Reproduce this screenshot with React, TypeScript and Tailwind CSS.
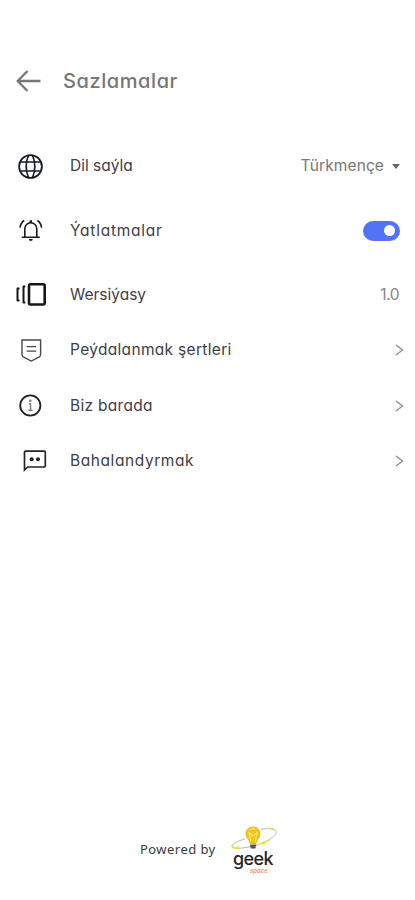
import React from "react";

type RowProps = {
  icon: React.ReactNode;
  label: string;
  rowClass: string;
  labelClass: string;
  children: React.ReactNode;
};

function Row({ icon, label, rowClass, labelClass, children }: RowProps) {
  return (
    <div className={`flex items-center ${rowClass}`}>
      <div className="flex w-[70px] shrink-0 items-center">{icon}</div>
      <span className={`whitespace-nowrap text-[15.5px] leading-5 text-[#404046] ${labelClass}`}>{label}</span>
      <div className="ml-auto flex items-center">{children}</div>
    </div>
  );
}

function Chevron() {
  return (
    <svg className="mr-[11px]" width="9" height="12" viewBox="0 0 9 12" fill="none" stroke="#8b8b8b" strokeWidth="1.3">
      <path d="M1 1 7.6 6 1 11" />
    </svg>
  );
}

const Globe = () => (
  <svg className="ml-[18px]" width="25" height="25" viewBox="0 0 25 25" fill="none" stroke="#141b2b" strokeWidth="1.8">
    <circle cx="12.5" cy="12.5" r="11.4" />
    <path d="M10.500 1.300C7.700 8 7.700 17 10.500 23.700M14.500 1.300c2.800 6.700 2.800 15.700 0 22.400" strokeWidth="1.6" />
    <path d="M2.200 8h20.600M2.200 17h20.600" strokeWidth="1.6" />
  </svg>
);

const Bell = () => (
  <svg className="ml-[19px]" width="24" height="23" viewBox="0 0 24 23" fill="none" stroke="#1c1c1f" strokeWidth="1.6">
    <path d="M5.8 18V9.7a6 6 0 0 1 12 0V18M2.8 18.2h18" />
    <path d="M11.8 3.8V1.3" strokeWidth="2.4" />
    <path d="M1 8.8c.2-3 1.7-5.6 4.2-7.3M22.6 8.8c-.2-3-1.7-5.6-4.2-7.3" />
    <path d="M9.8 20h4a2 2 0 0 1-4 0z" fill="#1c1c1f" stroke="none" />
  </svg>
);

const Version = () => (
  <svg className="ml-4" width="30" height="23" viewBox="0 0 30 23" fill="none" stroke="#171717">
    <rect x="13" y="1.3" width="15.7" height="20.2" rx="1.5" strokeWidth="2.6" />
    <path d="M9.300 3.500H7.500v16h1.800" strokeWidth="2" strokeLinejoin="round" />
    <path d="M3.500 5.500H1.500v12h2" strokeWidth="2" strokeLinejoin="round" />
  </svg>
);

const Shield = () => (
  <svg className="ml-[21px]" width="21" height="23" viewBox="0 0 21 23" fill="none" stroke="#48484d" strokeWidth="1.4">
    <path d="M1 1h18.6v14.600c0 1-.4 1.700-1.2 2.200l-8.100 4.200-8.100-4.200c-.8-.5-1.200-1.200-1.200-2.200z" />
    <path d="M5.7 7.7h9.5M5.7 12.2h9.5" strokeWidth="1.2" />
  </svg>
);

const Info = () => (
  <svg className="ml-[19px]" width="23" height="23" viewBox="0 0 23 23" fill="none">
    <circle cx="11.3" cy="11.5" r="10.1" stroke="#202124" strokeWidth="1.8" />
    <path d="M10 9.700h1.500v6.300M9.500 16.200h4" stroke="#85858a" strokeWidth="1.6" />
    <circle cx="11.3" cy="6.8" r="1.2" fill="#77777b" />
  </svg>
);

const Comment = () => (
  <svg className="ml-[23px]" width="24" height="22" viewBox="0 0 24 22" fill="none">
    <path d="M1.5 20V2.1c0-.5.3-.9.9-.9h19c.6 0 .9.4.9.9v14c0 .6-.3.9-.9.9H4.7z" stroke="#252525" strokeWidth="1.7" />
    <circle cx="8.7" cy="9.2" r="2" fill="#202020" />
    <circle cx="15" cy="9.2" r="2" fill="#202020" />
  </svg>
);

function GeekLogo() {
  return (
    <div className="w-12">
      <svg className="block" width="48" height="25" viewBox="0 0 48 25" fill="none">
        <path d="M15 13C7 15 1 18.500 2 21c1 2.400 12 1.500 23-1.500S47 10 46 5.500C45.3 2.500 37 2.100 31 3.300" stroke="#a5a5a5" strokeWidth=".8" />
        <path d="M3 19.400c-.8 2.200 3 3.300 7 3M28 18.500c5-1.300 9-2.900 12-4.600M37 2.400c3.500-.4 6.700.1 7.800 1.200" stroke="#e7e546" strokeWidth="1.2" />
        <path d="M23 1c-4.300 0-7 2.800-7 6.700 0 3.200 1.600 4.600 2.800 6.500.6 1.100.5 2.800 1.200 3.300h6c.8-.5.7-2.200 1.300-3.300C28.500 12.300 30 10.900 30 7.700 30 3.800 27.300 1 23 1z" fill="#f3c31c" stroke="#d7a516" strokeWidth=".6" />
        <path d="M20.800 15.500 19 6.500l4 3.500 4-3.500-1.800 9M20 4c1.500-1.500 4-1.600 5-.5" stroke="#fff06c" strokeWidth="1.1" />
        <path d="M20 18.500h6.200l-.8 4h-4.600z" fill="#59544e" />
        <circle cx="7" cy="22" r="1.4" fill="#f5df24" />
        <circle cx="33.500" cy="17" r="1.8" fill="#f5df24" />
      </svg>
      <div className="pl-[3px] text-[18px] font-medium leading-[15px] tracking-[-0.6px] text-[#242424]">geek</div>
      <div className="pl-[20px] pt-[1px] text-[6px] font-semibold italic leading-[7px] text-[#f39258]">space</div>
    </div>
  );
}

export default function App() {
  return (
    <div className="flex h-[900px] w-full flex-col bg-white font-['Inter','Noto_Sans',sans-serif] [font-feature-settings:'cv11']">
      <header className="mt-[61px] flex h-10 shrink-0 items-center">
        <svg className="ml-4" width="25" height="22" viewBox="0 0 25 22" fill="none" stroke="#777" strokeWidth="2.3">
          <path d="M11.500 1 1.700 11l9.800 10M1.700 11h22.800" />
        </svg>
        <h1 className="ml-[22px] text-[20px] font-medium leading-7 tracking-[0.58px] text-[#777]">Sazlamalar</h1>
      </header>
      <main className="mt-[33px] flex flex-col">
        <Row icon={<Globe />} label="Dil saýla" rowClass="h-16" labelClass="tracking-normal">
          <span className="text-[15.5px] leading-5 tracking-[0.1px] text-[#777]">Türkmençe</span>
          <svg className="ml-[8px] mr-[15px]" width="8" height="5" viewBox="0 0 8 5">
            <path d="M0 0h8L4 5z" fill="#666" />
          </svg>
        </Row>
        <Row icon={<Bell />} label="Ýatlatmalar" rowClass="h-[65px]" labelClass="tracking-[0.75px]">
          <button type="button" role="switch" aria-checked="true" aria-label="Ýatlatmalar" className="mr-[15px] flex h-5 w-[37px] items-center justify-end rounded-full bg-[#5273f5] pr-[5px]">
            <span className="h-[11px] w-[11px] rounded-full bg-white" />
          </button>
        </Row>
        <Row icon={<Version />} label="Wersiýasy" rowClass="mt-1 h-[55px]" labelClass="tracking-normal">
          <span className="mr-4 text-[15.5px] leading-5 tracking-[-0.5px] text-[#858585]">1.0</span>
        </Row>
        <Row icon={<Shield />} label="Peýdalanmak şertleri" rowClass="h-14" labelClass="tracking-[0.32px]"><Chevron /></Row>
        <Row icon={<Info />} label="Biz barada" rowClass="h-[55px]" labelClass="tracking-[0.3px]"><Chevron /></Row>
        <Row icon={<Comment />} label="Bahalandyrmak" rowClass="h-14" labelClass="tracking-[0.58px]"><Chevron /></Row>
      </main>
      <footer className="mb-[26px] mt-auto flex items-center pl-[140px]">
        <span className="w-[90px] whitespace-nowrap pb-[2px] font-['Noto_Sans',sans-serif] text-[13px] leading-5 tracking-[0.45px] text-[#393939]">Powered by</span>
        <GeekLogo />
      </footer>
    </div>
  );
}
